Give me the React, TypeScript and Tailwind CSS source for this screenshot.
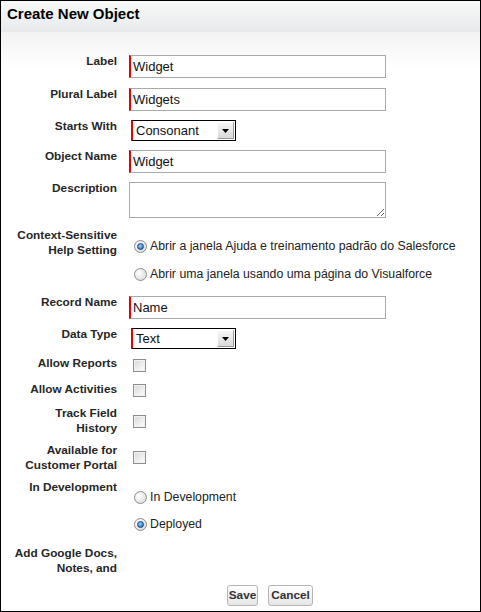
import React from "react";

function cn(...a: Array<string | false | null | undefined>) {
  return a.filter(Boolean).join(" ");
}

const LABEL = "w-[116px] shrink-0 pt-[1px] text-right font-bold text-[11.8px] leading-[15px] text-[#262626] whitespace-pre-line";

function Row({
  label, h, ctrl = "pt-[2px]", children
}:{
  label: string; h: string; ctrl?: string; children?: React.ReactNode;
}) {
  return (
    <div className={cn("flex", h)}>
      <div className={LABEL}>{label}</div>
      <div className={cn("ml-[12px] flex-1", ctrl)}>{children}</div>
    </div>
  );
}

function TextBox({ value }: { value: string }) {
  return (
    <div className="w-[257px] h-[23px] border border-[#a9a9a9] border-l-2 border-l-[#e60000] bg-white pl-[2px] flex items-center text-[13px] text-[#111]">
      {value}
    </div>
  );
}

function Select({ value }: { value: string }) {
  return (
    <div className="ml-[2px] w-[105px] h-[21px] border border-black border-l-2 border-l-[#e60000] bg-white flex items-center">
      <span className="flex-1 pl-[3px] text-[13px] leading-[19px] text-[#111]">{value}</span>
      <span className="mr-[1px] w-[17px] h-[17px] flex items-center justify-center bg-gradient-to-b from-[#f6f6f6] to-[#d9d9d9] border border-t-white border-l-white border-r-[#9a9a9a] border-b-[#9a9a9a]">
        <svg width="7" height="4" viewBox="0 0 7 4"><path d="M0 0h7L3.5 4z" fill="#000" /></svg>
      </span>
    </div>
  );
}

function Radio({ checked, label }: { checked?: boolean; label: string }) {
  return (
    <div className="flex items-center h-[20px] pl-[5px]">
      <span className="w-[13px] h-[13px] rounded-full border border-[#8d8d8d] bg-[radial-gradient(circle_at_35%_35%,#ffffff,#d4d4d4)] flex items-center justify-center">
        {checked && (
          <span className="w-[7px] h-[7px] rounded-full border border-[#1b3f73] bg-[radial-gradient(circle_at_40%_35%,#8fd0ff,#1d5fb0)]" />
        )}
      </span>
      <span className="ml-[3px] text-[12.3px] leading-[15px] text-[#222]">{label}</span>
    </div>
  );
}

function Check() {
  return (
    <div className="ml-[4px] w-[13px] h-[13px] border border-[#8e8e8e] shadow-[inset_0_0_0_1px_#f2f2f2] bg-gradient-to-br from-[#d6d6d6] to-white" />
  );
}

export default function App() {
  return (
    <div className="w-[481px] h-[612px] border border-black bg-white flex flex-col font-['Liberation_Sans',Arial,sans-serif]">
      {/* header */}
      <div className="h-[31px] shrink-0 px-[6px] pt-[4px] bg-gradient-to-b from-[#f8f9f9] to-[#e7eaeb]">
        <h2 className="text-[15px] leading-[18px] font-bold text-black">Create New Object</h2>
      </div>

      {/* body */}
      <div className="flex-1 pt-[21px] bg-[linear-gradient(#f3f3f3,#ffffff_36px)]">
        <Row label="Label" h="h-[33px]"><TextBox value="Widget" /></Row>
        <Row label="Plural Label" h="h-[32px]"><TextBox value="Widgets" /></Row>
        <Row label="Starts With" h="h-[30px]"><Select value="Consonant" /></Row>
        <Row label="Object Name" h="h-[32px]"><TextBox value="Widget" /></Row>
        <Row label="Description" h="h-[47px]">
          <textarea
            readOnly
            className="block w-[257px] h-[36px] border border-[#a9a9a9] bg-white outline-none"
          />
        </Row>
        <Row label={"Context-Sensitive\nHelp Setting"} h="h-[67px]" ctrl="pt-[9px] flex flex-col gap-[8px]">
          <Radio checked label="Abrir a janela Ajuda e treinamento padrão do Salesforce" />
          <Radio label="Abrir uma janela usando uma página do Visualforce" />
        </Row>
        <Row label="Record Name" h="h-[32px]"><TextBox value="Name" /></Row>
        <Row label="Data Type" h="h-[29px]"><Select value="Text" /></Row>
        <Row label="Allow Reports" h="h-[26px]" ctrl="pt-[4px]"><Check /></Row>
        <Row label="Allow Activities" h="h-[24px]" ctrl="pt-[3px]"><Check /></Row>
        <Row label={"Track Field\nHistory"} h="h-[37px]" ctrl="pt-[10px]"><Check /></Row>
        <Row label={"Available for\nCustomer Portal"} h="h-[37px]" ctrl="pt-[9px]"><Check /></Row>
        <Row label="In Development" h="h-[66px]" ctrl="pt-[8px] flex flex-col gap-[7px]">
          <Radio label="In Development" />
          <Radio checked label="Deployed" />
        </Row>
        <Row label={"Add Google Docs,\nNotes, and"} h="h-[30px]" />

        <div className="mt-[10px] ml-[226px] flex gap-[10px]">
          <button className="w-[31px] h-[21px] rounded-[3px] border border-[#b5b5b5] bg-gradient-to-b from-white to-[#e6e6e6] text-[11.8px] font-bold text-[#333]">
            Save
          </button>
          <button className="w-[45px] h-[21px] rounded-[3px] border border-[#b5b5b5] bg-gradient-to-b from-white to-[#e6e6e6] text-[11.8px] font-bold text-[#333]">
            Cancel
          </button>
        </div>
      </div>
    </div>
  );
}
